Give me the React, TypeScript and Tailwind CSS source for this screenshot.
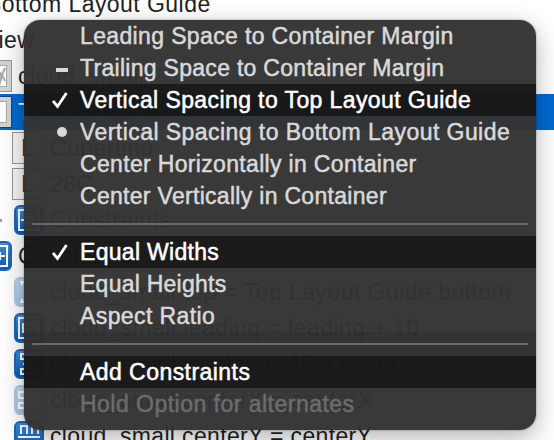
import React from "react";

type IconKind = "pins" | "width" | "center" | "top" | "lead" | "centerY";

function ConstraintIcon({ kind, faded }: { kind: IconKind; faded?: boolean }) {
  const shapes: Record<IconKind, React.ReactNode> = {
    pins: <path d="M5 5H25V25H5ZM7 15H12M18 15H23M15 8V12M15 18V22M12 12H18V18H12Z" />,
    lead: <path d="M5 5H25V25H5M5 4V26M9 10V20M10 11H14V19H10M18 20V10H22V20" />,
    top: <path d="M6 5H24M6 25H24M15 6V24M8 5V8M22 5V8M8 25V22M22 25V22" />,
    width: <path d="M7 5H23V10H7ZM7 20H23V25H7ZM9 15H21" />,
    center: <path d="M5 7H11V13H5ZM5 18H11V23H5ZM19 7H25V13H19ZM19 18H25V23H19ZM15 3V27" />,
    centerY: <path d="M7 13V5H13V13M18 13V5H24V13M4 16H26M7 28V19M13 28V19M18 28V19M24 28V19" />,
  };
  return (
    <svg viewBox="0 0 30 30" className={`size-[30px] shrink-0 ${faded ? "opacity-35" : ""}`}>
      <defs>
        <linearGradient id="blue" x1="0" y1="0" x2="0" y2="1">
          <stop offset="0" stopColor="#3d8fe0" />
          <stop offset="1" stopColor="#0b58ad" />
        </linearGradient>
      </defs>
      <rect x="1" y="1" width="28" height="28" rx="5" fill="url(#blue)" stroke="#1c66b8" strokeWidth="2" />
      <g fill="none" stroke="white" strokeWidth="2">{shapes[kind]}</g>
    </svg>
  );
}

function ViewIcon({ kind }: { kind: "image" | "view" | "label" }) {
  if (kind === "label")
    return (
      <div className="flex size-8 shrink-0 items-center justify-center border border-[#999] bg-[#f8f8f8] text-[24px] text-[#333]">L</div>
    );
  const edge = kind === "view" ? "border-[#17467c]" : "border-[#999]";
  return (
    <div className={`size-8 shrink-0 border bg-[#d5d5d5] p-1 ${edge}`}>
      <div className="size-[22px] border border-[#aaa] bg-white">
        {kind === "image" && (
          <svg viewBox="0 0 20 20" className="size-full" fill="none" stroke="#aaa" strokeWidth="2">
            <path d="M13 20L16 9M16 9L11 4M16 9L19 2M16 9L10 11M16 9L19 15" />
          </svg>
        )}
      </div>
    </div>
  );
}

function TreeRow({ pad, icon, text, className = "" }: { pad: string; icon?: React.ReactNode; text: React.ReactNode; className?: string }) {
  return (
    <div className={`flex h-9 shrink-0 items-center gap-[6px] whitespace-nowrap ${pad} ${className}`}>
      {icon}
      <span>{text}</span>
    </div>
  );
}

function MenuRow({ label, mark, active, muted, tracking = "tracking-[0.4px]" }: { label: string; mark?: "check" | "dash" | "dot"; active?: boolean; muted?: boolean; tracking?: string }) {
  const tone = active ? "bg-black/52 text-white" : muted ? "text-[#6c6c6c]" : "text-[#d9d9d9]";
  return (
    <div className={`flex h-8 items-center whitespace-nowrap ${tracking} ${tone}`}>
      <div className="flex w-14 shrink-0 justify-end pr-3">
        {mark === "check" && (
          <svg viewBox="0 0 16 18" className="h-[18px] w-4" fill="none" stroke="currentColor" strokeWidth="2.8">
            <path d="M1 10L5.5 15.5L14.5 2" />
          </svg>
        )}
        {mark === "dash" && <div className="mt-[3px] h-1 w-3 bg-current" />}
        {mark === "dot" && <div className="mr-px size-[10px] rounded-full bg-current" />}
      </div>
      <span className="[-webkit-text-stroke:0.5px_currentColor]">{label}</span>
    </div>
  );
}

function Separator({ className = "" }: { className?: string }) {
  return (
    <div className={`h-6 px-2 pt-[11px] ${className}`}>
      <div className="h-[2px] bg-[#696969]" />
    </div>
  );
}

export default function App() {
  return (
    <div className="relative h-[440px] w-[554px] overflow-hidden bg-white font-['Liberation_Sans',Arial,sans-serif] text-[23px] text-[#222]">
      <div className="-mt-[14px] flex flex-col tracking-[0.45px]">
        <TreeRow pad="-ml-[14px]" text="Bottom Layout Guide" />
        <TreeRow pad="-ml-[17px]" text="View" />
        <TreeRow pad="-ml-5" icon={<ViewIcon kind="image" />} text="cloud_small" />
        <TreeRow
          pad="pl-0"
          className="bg-[#0069d2]"
          icon={<div className="-ml-5"><ViewIcon kind="view" /></div>}
          text={<><span className="text-white">T</span>extContainer</>}
        />
        <TreeRow pad="pl-3" icon={<ViewIcon kind="label" />} text="Cupertino" />
        <TreeRow pad="pl-3" icon={<ViewIcon kind="label" />} text="28C" />
        <TreeRow
          pad="pl-0"
          icon={<><i className="h-[3px] w-[2px] bg-[#999]" /><div className="ml-[6px]"><ConstraintIcon kind="pins" /></div></>}
          text="Constraints"
        />
        <TreeRow pad="-ml-[18px]" icon={<ConstraintIcon kind="pins" />} text="Constraints" />
        <TreeRow pad="pl-[14px]" icon={<ConstraintIcon kind="top" faded />} text="cloud_small.top = Top Layout Guide.bottom" />
        <TreeRow pad="pl-[14px]" icon={<ConstraintIcon kind="lead" />} text="cloud_small.leading = leading + 10" />
        <TreeRow pad="pl-[14px]" icon={<ConstraintIcon kind="width" />} text="cloud_small.width = 0.45 × width" />
        <TreeRow pad="pl-[14px]" className="tracking-[0.35px]" icon={<ConstraintIcon kind="center" faded />} text="cloud_small.centerX = centerX" />
        <TreeRow pad="pl-[14px]" className="tracking-[0.35px]" icon={<ConstraintIcon kind="centerY" />} text="cloud_small.centerY = centerY" />
      </div>

      <div className="absolute left-6 top-5 h-[410px] w-[512px] overflow-hidden rounded-[16px] bg-[#333333]/97 shadow-[0_0_2px_rgba(0,0,0,0.45),0_8px_26px_rgba(0,0,0,0.3)]">
        <MenuRow label="Leading Space to Container Margin" tracking="tracking-[0.36px]" />
        <MenuRow label="Trailing Space to Container Margin" tracking="tracking-[0.29px]" mark="dash" />
        <MenuRow label="Vertical Spacing to Top Layout Guide" mark="check" active />
        <MenuRow label="Vertical Spacing to Bottom Layout Guide" tracking="tracking-[0.44px]" mark="dot" />
        <MenuRow label="Center Horizontally in Container" tracking="tracking-[0.33px]" />
        <MenuRow label="Center Vertically in Container" tracking="tracking-[0.3px]" />
        <Separator />
        <MenuRow label="Equal Widths" tracking="tracking-[0.3px]" mark="check" active />
        <MenuRow label="Equal Heights" tracking="tracking-[0.25px]" />
        <MenuRow label="Aspect Ratio" />
        <Separator className="bg-black/8" />
        <MenuRow label="Add Constraints" tracking="tracking-[0.45px]" active />
        <MenuRow label="Hold Option for alternates" tracking="tracking-[0.48px]" muted />
      </div>
    </div>
  );
}
